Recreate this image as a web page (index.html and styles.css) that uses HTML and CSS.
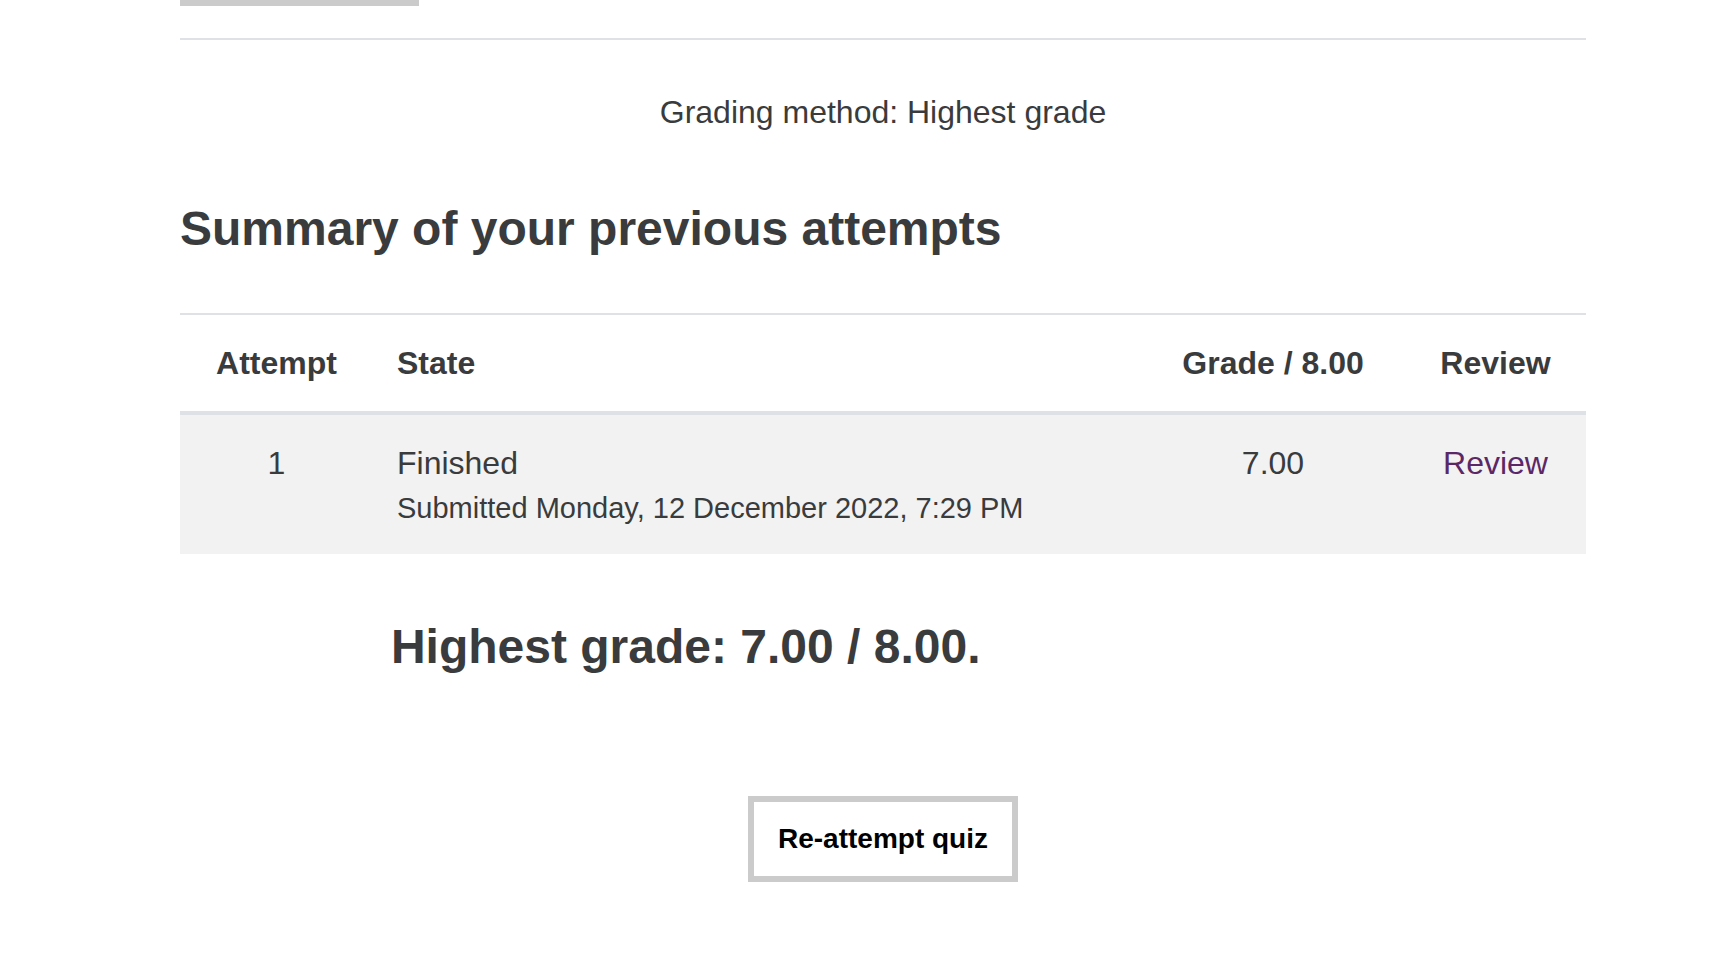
FILE: index.html
```html
<!DOCTYPE html>
<html lang="en">
<head>
<meta charset="utf-8">
<title>Quiz attempts</title>
<link rel="stylesheet" href="styles.css">
</head>
<body>
<main class="page">
  <div class="panel-edge"></div>
  <hr class="divider">
  <p class="grading">Grading method: Highest grade</p>
  <h3 class="heading">Summary of your previous attempts</h3>
  <table class="attempts">
    <thead>
      <tr>
        <th scope="col" class="col-attempt">Attempt</th>
        <th scope="col" class="col-state">State</th>
        <th scope="col" class="col-grade">Grade / 8.00</th>
        <th scope="col" class="col-review">Review</th>
      </tr>
    </thead>
    <tbody>
      <tr>
        <td>1</td>
        <td class="col-state">Finished<span class="submitted">Submitted Monday, 12 December 2022, 7:29 PM</span></td>
        <td>7.00</td>
        <td><a class="review-link" href="#review">Review</a></td>
      </tr>
    </tbody>
  </table>
  <h3 class="heading result">Highest grade: 7.00 / 8.00.</h3>
  <div class="actions">
    <button type="button" class="button">Re-attempt quiz</button>
  </div>
</main>
</body>
</html>
```

FILE: styles.css
```css
body {
  margin: 0;
  background: #fff;
  color: #393b3d;
  font-family: "Liberation Sans", Arial, sans-serif;
  font-size: 32px;
  line-height: 48px;
}

.page {
  padding: 0 124px 48px 180px;
}

.panel-edge {
  width: 17%;
  height: 6px;
  background: #cbcbcb;
}

.divider {
  margin: 32px 0 48px;
  border: 0;
  border-top: 2px solid #dee2e6;
}

.grading {
  margin: 0 0 64px;
  text-align: center;
}

.heading {
  margin: 0;
  font-size: 48px;
  line-height: 58px;
}

.attempts {
  width: 100%;
  margin: 55px 0 64px;
  border-spacing: 0;
  table-layout: fixed;
  text-align: center;
}

.attempts th,
.attempts td {
  padding: 24px;
  vertical-align: top;
}

.attempts th {
  border-top: 2px solid #dee2e6;
  border-bottom: 4px solid #dee2e6;
}

.attempts td {
  background: #f2f2f2;
}

.attempts .col-state {
  text-align: left;
}

.col-attempt {
  width: 145px;
}

.col-grade {
  width: 216px;
}

.col-review {
  width: 133px;
}

.submitted {
  display: block;
  font-size: 29px;
  line-height: 43px;
}

.review-link {
  color: #5b2766;
  text-decoration: none;
}

.result {
  margin-left: 15%;
}

.actions {
  margin-top: 120px;
  display: flex;
  justify-content: center;
}

.button {
  padding: 16px 24px;
  border: 6px solid #cbcbcb;
  background: #fff;
  color: #000;
  font-family: inherit;
  font-size: 28px;
  font-weight: bold;
  line-height: 42px;
}
```
